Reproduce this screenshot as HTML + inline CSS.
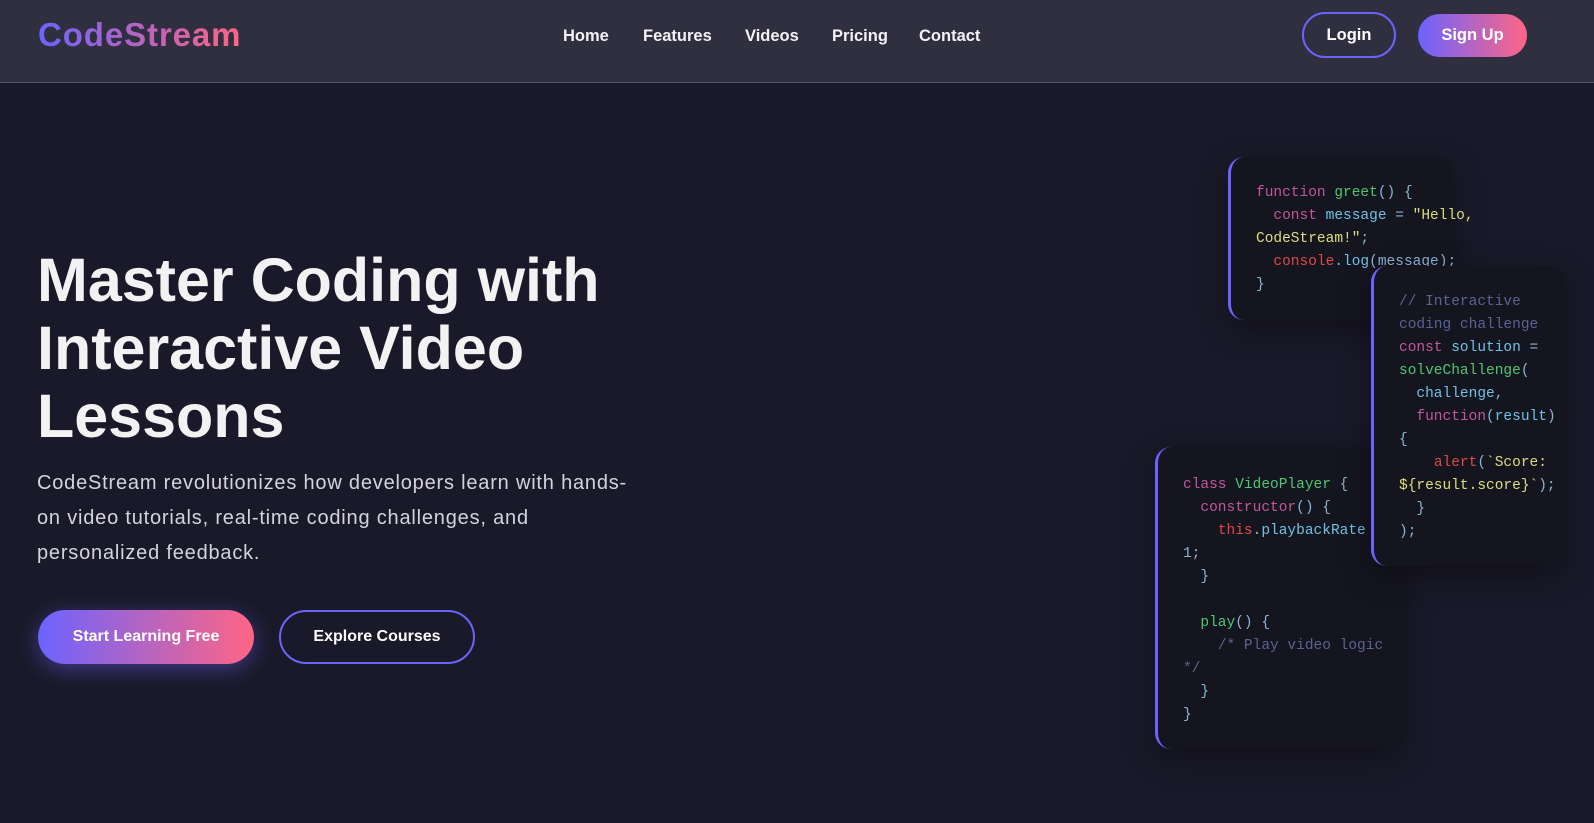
<!DOCTYPE html>
<html><head><meta charset="utf-8"><style>
*{margin:0;padding:0;box-sizing:border-box}
html,body{width:1594px;height:823px;overflow:hidden;background:#1a1929;font-family:"Liberation Sans",sans-serif;color:#fff}
header{position:absolute;left:0;top:0;width:1594px;height:83px;background:#302f40;border-bottom:1px solid #55546a}
.logo{position:absolute;left:38px;top:16px;font-size:33px;font-weight:bold;letter-spacing:0.9px;background:linear-gradient(90deg,#6c63ff,#ff6584);-webkit-background-clip:text;background-clip:text;color:transparent}
.nav a{position:absolute;top:27px;font-size:16.5px;font-weight:bold;color:#f2f2f6;text-decoration:none}
.btn{position:absolute;border-radius:999px;display:flex;align-items:center;justify-content:center;font-weight:bold;color:#fff}
h1{position:absolute;left:37px;top:246px;font-size:61px;line-height:68px;font-weight:bold;color:#f2f2f2;white-space:nowrap}
p.lead{position:absolute;left:37px;top:466px;font-size:20px;line-height:35px;letter-spacing:0.8px;color:#d4d4dc;white-space:nowrap}
.card{position:absolute;background:#151520;border-left:3px solid #6c63ff;border-radius:16px;box-shadow:0 10px 30px rgba(0,0,0,.35);font-family:"Liberation Mono",monospace;font-size:14.5px;line-height:23px;white-space:pre;color:#8ab4d4;padding-left:25px}
.k{color:#c3569b}.f{color:#4cc870}.p{color:#6ec1e4}.s{color:#dede7a}.r{color:#e04848}.c{color:#5a6290}
</style></head><body>
<header>
<div class="logo">CodeStream</div>
<div class="nav">
<a style="left:563px">Home</a><a style="left:643px">Features</a><a style="left:745px">Videos</a><a style="left:832px">Pricing</a><a style="left:919px">Contact</a>
</div>
<div class="btn" style="left:1302px;top:12px;width:94px;height:46px;border:2px solid #6c63ff;font-size:16.5px">Login</div>
<div class="btn" style="left:1418px;top:14px;width:109px;height:43px;background:linear-gradient(90deg,#6c63ff,#ff6584);font-size:16.5px">Sign Up</div>
</header>

<h1>Master Coding with<br>Interactive Video<br>Lessons</h1>
<p class="lead">CodeStream revolutionizes how developers learn with hands-<br>on video tutorials, real-time coding challenges, and<br>personalized feedback.</p>
<div class="btn" style="left:38px;top:610px;width:216px;height:54px;background:linear-gradient(90deg,#6c63ff,#ff6584);font-size:16px;box-shadow:0 5px 22px rgba(108,99,255,.45)">Start Learning Free</div>
<div class="btn" style="left:279px;top:610px;width:196px;height:54px;border:2px solid #6c63ff;font-size:16px">Explore Courses</div>

<div class="card" style="left:1228px;top:157px;width:225px;height:163px;padding-top:25px"><span class="k">function</span> <span class="f">greet</span>() {
  <span class="k">const</span> <span class="p">message</span> = <span class="s">"Hello,</span>
<span class="s">CodeStream!"</span>;
  <span class="r">console</span>.<span class="p">log</span>(message);
}</div>

<div class="card" style="left:1155px;top:447px;width:248px;height:302px;padding-top:27px"><span class="k">class</span> <span class="f">VideoPlayer</span> {
  <span class="k">constructor</span>() {
    <span class="r">this</span>.<span class="p">playbackRate</span> =
1;
  }

  <span class="f">play</span>() {
    <span class="c">/* Play video logic</span>
<span class="c">*/</span>
  }
}</div>

<div class="card" style="left:1371px;top:266px;width:195px;height:300px;padding-top:25px"><span class="c">// Interactive</span>
<span class="c">coding challenge</span>
<span class="k">const</span> <span class="p">solution</span> =
<span class="f">solveChallenge</span>(
  <span class="p">challenge</span>,
  <span class="k">function</span>(<span class="p">result</span>)
{
    <span class="r">alert</span>(<span class="s">`Score:</span>
<span class="s">${result.score}`</span>);
  }
);</div>
</body></html>
